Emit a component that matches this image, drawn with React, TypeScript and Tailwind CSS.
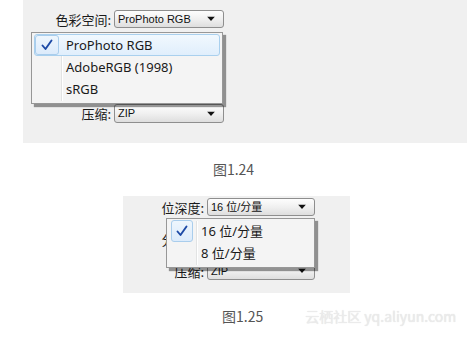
import React from "react";

const cjk = { fontFamily: '"Noto Sans CJK SC", "Noto Sans", sans-serif' };
const ui = { fontFamily: '"Noto Sans", "Noto Sans CJK SC", sans-serif' };
const tah = { fontFamily: '"Liberation Sans", "Noto Sans CJK SC", sans-serif' };

function Arrow() {
  return (
    <svg width="8" height="5" viewBox="0 0 8 5" className="absolute right-[8px] top-1/2 -translate-y-1/2">
      <path d="M0 0 H8 L4 4.5 Z" fill="#111" />
    </svg>
  );
}

function Select({ text, w, h = 18 }: { text: string; w: number; h?: number }) {
  return (
    <div
      className="relative flex items-center rounded-[3px] border border-[#8e8e8e] bg-gradient-to-b from-[#fdfdfd] via-[#f0f0f0] to-[#dedede] pl-[3px] text-[11px] text-[#111]"
      style={{ width: w, height: h, ...tah }}
    >
      <span className="leading-none">{text}</span>
      <Arrow />
    </div>
  );
}

function Check() {
  return (
    <svg width="12" height="12" viewBox="0 0 12 12">
      <path d="M1.5 6.5 L4.5 10 L10.5 1.5" fill="none" stroke="#1d4aa6" strokeWidth="1.9" strokeLinejoin="round" strokeLinecap="round" />
    </svg>
  );
}

function Menu({
  items,
  width,
  highlightFull,
}: {
  items: string[];
  width: number;
  highlightFull: boolean;
}) {
  return (
    <div
      className="relative border border-[#979797] bg-[#f4f4f4] px-[2px] pt-[1px] pb-[3px] shadow-[3px_3px_1px_rgba(0,0,0,0.4)]"
      style={{ width }}
    >
      <div className="absolute left-[29px] top-[2px] bottom-[2px] w-[1px] bg-[#e2e3e3]" />
      <div className="absolute left-[30px] top-[2px] bottom-[2px] w-[1px] bg-[#ffffff]" />
      {items.map((t, i) => (
        <div
          key={t}
          className={
            "relative flex h-[22px] items-center " +
            (i === 0 && highlightFull
              ? "rounded-[3px] border border-[#a9d0ee] bg-gradient-to-b from-[#f1f8fe] to-[#e0eefc]"
              : "border border-transparent")
          }
        >
          <div className="flex w-[24px] shrink-0 items-center justify-center">
            {i === 0 ? (
              highlightFull ? (
                <div className="-ml-[1px] flex h-[20px] w-[24px] items-center justify-center rounded-[3px] border border-[#a9cdec] bg-gradient-to-b from-[#eef6fd] to-[#dcebfb]">
                  <Check />
                </div>
              ) : (
                <div className="-ml-[1px] flex h-[22px] w-[22px] items-center justify-center rounded-[3px] border border-[#a9cdec] bg-gradient-to-b from-[#eef6fd] to-[#dcebfb]">
                  <Check />
                </div>
              )
            ) : null}
          </div>
          <span className="ml-[7px] text-[13px] leading-none text-[#1a1a1a]" style={ui}>
            {t}
          </span>
        </div>
      ))}
    </div>
  );
}

function Row({ label, labelW, children }: { label: string; labelW: number; children?: React.ReactNode }) {
  return (
    <div className="flex items-center">
      <div className="shrink-0 text-right text-[13px] leading-none text-[#1a1a1a]" style={{ width: labelW, ...cjk }}>
        {label}
      </div>
      <div className="ml-[3px]">{children}</div>
    </div>
  );
}

export default function App() {
  return (
    <div className="h-[340px] w-[467px] overflow-hidden bg-white">
      {/* Panel 1 */}
      <div className="relative ml-[23px] h-[143px] w-[444px] bg-[#f0f0f0]">
        <div className="flex flex-col pt-[10px]">
          <Row label="色彩空间:" labelW={88}>
            <Select text="ProPhoto RGB" w={110} />
          </Row>
          <div className="mt-[76px]">
            <Row label="压缩:" labelW={88}>
              <Select text="ZIP" w={110} h={19} />
            </Row>
          </div>
        </div>
        <div className="absolute left-[8px] top-[32px]">
          <Menu items={["ProPhoto RGB", "AdobeRGB (1998)", "sRGB"]} width={192} highlightFull />
        </div>
      </div>

      {/* Caption 1 */}
      <div className="flex h-[53px] items-center justify-center">
        <span className="text-[14px] text-[#555]" style={cjk}>
          图1.24
        </span>
      </div>

      {/* Panel 2 */}
      <div className="relative ml-[123px] h-[97px] w-[227px] bg-[#f0f0f0]">
        <div className="flex flex-col gap-[14px] pt-[2px]">
          <Row label="位深度:" labelW={81}>
            <Select text="16 位/分量" w={108} />
          </Row>
          <Row label="分辨率:" labelW={81}>
            <Select text="" w={108} />
          </Row>
          <Row label="压缩:" labelW={81}>
            <Select text="ZIP" w={108} />
          </Row>
        </div>
        <div className="absolute left-[43px] top-[22px]">
          <Menu items={["16 位/分量", "8 位/分量"]} width={149} highlightFull={false} />
        </div>
      </div>

      {/* Caption 2 */}
      <div className="relative flex h-[47px] items-center">
        <span className="ml-[222px] text-[14px] text-[#555]" style={cjk}>
          图1.25
        </span>
        <span
          className="ml-[42px] text-[14px] text-[#ebebeb]"
          style={{ ...cjk, textShadow: "0 0 1px #dcdcdc" }}
        >
          云栖社区 yq.aliyun.com
        </span>
      </div>
    </div>
  );
}
